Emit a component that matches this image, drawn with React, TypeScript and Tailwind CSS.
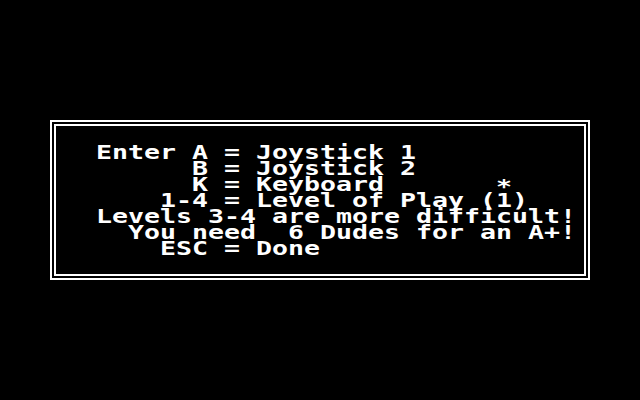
const lines = [
  "Enter A = Joystick 1",
  "      B = Joystick 2",
  "      K = Keyboard       ",
  "    1-4 = Level of Play (1)",
  "Levels 3-4 are more difficult!",
  "  You need  6 Dudes for an A+!",
  "    ESC = Done",
];

export default function App() {
  return (
    <div className="w-[640px] h-[400px] bg-black overflow-hidden pt-[120px] pl-[50px]">
      {/* double-line frame */}
      <div className="w-[540px] h-[160px] border-2 border-white p-[2px] flex">
        <div className="flex-1 border-2 border-white pt-[18px] pl-[40px]">
          {lines.map((line, i) => (
            <div
              key={i}
              className="h-4 leading-4 whitespace-pre text-white font-bold text-[19px] font-['DejaVu_Sans_Mono',monospace] origin-left scale-x-[1.3986]"
            >
              {line}
              {/* marker next to the selected input */}
              {i === 2 && <span className="inline-block translate-y-[2px]">*</span>}
            </div>
          ))}
        </div>
      </div>
    </div>
  );
}
